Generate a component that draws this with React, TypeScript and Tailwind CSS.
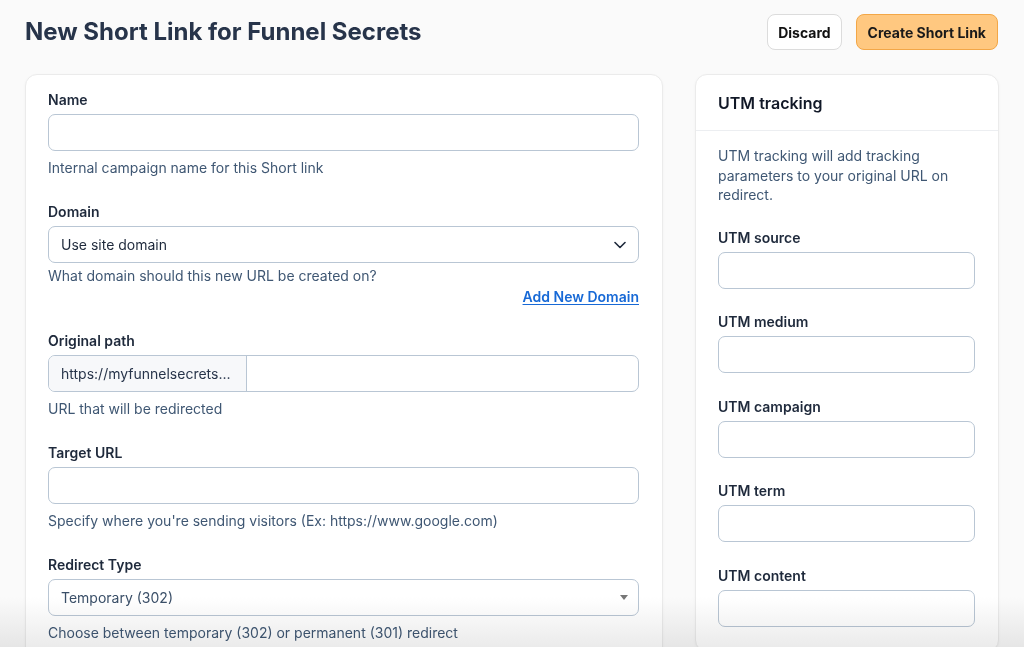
import React from "react";

const font = { fontFamily: "Inter, 'Noto Sans', sans-serif" };

function Label({ children }: { children: React.ReactNode }) {
  return <div className="text-[14px] leading-5 font-semibold text-[#1e293b] mb-1">{children}</div>;
}

function Help({ children, tight }: { children: React.ReactNode; tight?: boolean }) {
  return (
    <div className={tight ? "text-[14px] leading-5 text-[#3f5773] mt-[3px]" : "text-[14px] leading-5 text-[#3f5773] mt-[7px]"}>
      {children}
    </div>
  );
}

function Input() {
  return <div className="h-[37px] rounded-[7px] border border-[#b9c6d4] bg-white" />;
}

export default function App() {
  return (
    <div className="relative min-h-[647px] h-[647px] overflow-hidden bg-[#fafafa]" style={font}>
      <div className="flex items-center justify-between pl-[25px] pr-[26px] pt-[14px]">
        <h1 className="text-[24px] leading-9 font-bold text-[#27344a]">
          New Short Link for Funnel Secrets
        </h1>
        <div className="flex gap-[14px]">
          <button className="h-9 px-[10px] rounded-lg border border-[#dcdcdc] bg-white text-[14px] font-bold text-[#111]">
            Discard
          </button>
          <button className="h-9 px-[11px] rounded-lg border border-[#f3a747] bg-[#ffc880] text-[14px] font-bold text-[#1a1a1a]">
            Create Short Link
          </button>
        </div>
      </div>

      <div className="flex gap-[32px] pl-[25px] pr-[25px] mt-[24px]">
        <div className="w-[638px] rounded-xl border border-[#ebebeb] bg-white shadow-[0_1px_3px_rgba(0,0,0,0.04)] pl-[22px] pr-[23px] pt-[15px] pb-6 flex flex-col gap-6">
          <div>
            <Label>Name</Label>
            <Input />
            <Help>Internal campaign name for this Short link</Help>
          </div>
          <div>
            <Label>Domain</Label>
            <div className="h-[37px] rounded-[7px] border border-[#b9c6d4] bg-white flex items-center justify-between pl-3 pr-[12px]">
              <span className="text-[14px] text-[#1e293b]">Use site domain</span>
              <svg width="12" height="8" viewBox="0 0 12 8" fill="none">
                <path d="M1 1.5l5 5 5-5" stroke="#1e293b" strokeWidth="1.6" strokeLinecap="round" strokeLinejoin="round" />
              </svg>
            </div>
            <Help tight>What domain should this new URL be created on?</Help>
            <div className="flex justify-end mt-[1px]">
              <a className="text-[14px] leading-5 font-semibold text-[#1769d6] underline underline-offset-2">Add New Domain</a>
            </div>
          </div>
          <div>
            <Label>Original path</Label>
            <div className="h-[37px] rounded-[7px] border border-[#b9c6d4] bg-white flex overflow-hidden">
              <div className="w-[198px] bg-[#f7f8fa] border-r border-[#b9c6d4] flex items-center pl-3 text-[14px] text-[#27344a]">
                https://myfunnelsecrets...
              </div>
              <div className="flex-1" />
            </div>
            <Help>URL that will be redirected</Help>
          </div>
          <div>
            <Label>Target URL</Label>
            <Input />
            <Help>Specify where you're sending visitors (Ex: https://www.google.com)</Help>
          </div>
          <div>
            <Label>Redirect Type</Label>
            <div className="h-[37px] rounded-[7px] border border-[#b9c6d4] bg-white flex items-center justify-between pl-3 pr-[10px]">
              <span className="text-[14px] text-[#3a4f68]">Temporary (302)</span>
              <svg width="8" height="5" viewBox="0 0 8 5">
                <path d="M0 0h8L4 5z" fill="#777" />
              </svg>
            </div>
            <Help>Choose between temporary (302) or permanent (301) redirect</Help>
          </div>
        </div>

        <div className="w-[304px] rounded-xl border border-[#ebebeb] bg-white shadow-[0_1px_3px_rgba(0,0,0,0.04)] self-start">
          <div className="h-[56px] flex items-center pl-[22px] pr-[23px] border-b border-[#eceef1]">
            <span className="text-[16px] font-semibold text-[#111827]">UTM tracking</span>
          </div>
          <div className="pl-[22px] pr-[23px] pt-[15px] pb-6">
            <p className="text-[14px] leading-[19.5px] text-[#3f5773] mb-[23px]">
              UTM tracking will add tracking parameters to your original URL on redirect.
            </p>
            <div className="flex flex-col gap-[23.5px]">
              {["UTM source", "UTM medium", "UTM campaign", "UTM term", "UTM content"].map((l) => (
                <div key={l}>
                  <Label>{l}</Label>
                  <Input />
                </div>
              ))}
            </div>
          </div>
        </div>
      </div>

      <div className="pointer-events-none absolute inset-x-0 bottom-0 h-[50px] mix-blend-multiply bg-gradient-to-b from-[#ffffff] to-[#ebebeb]" />
    </div>
  );
}
